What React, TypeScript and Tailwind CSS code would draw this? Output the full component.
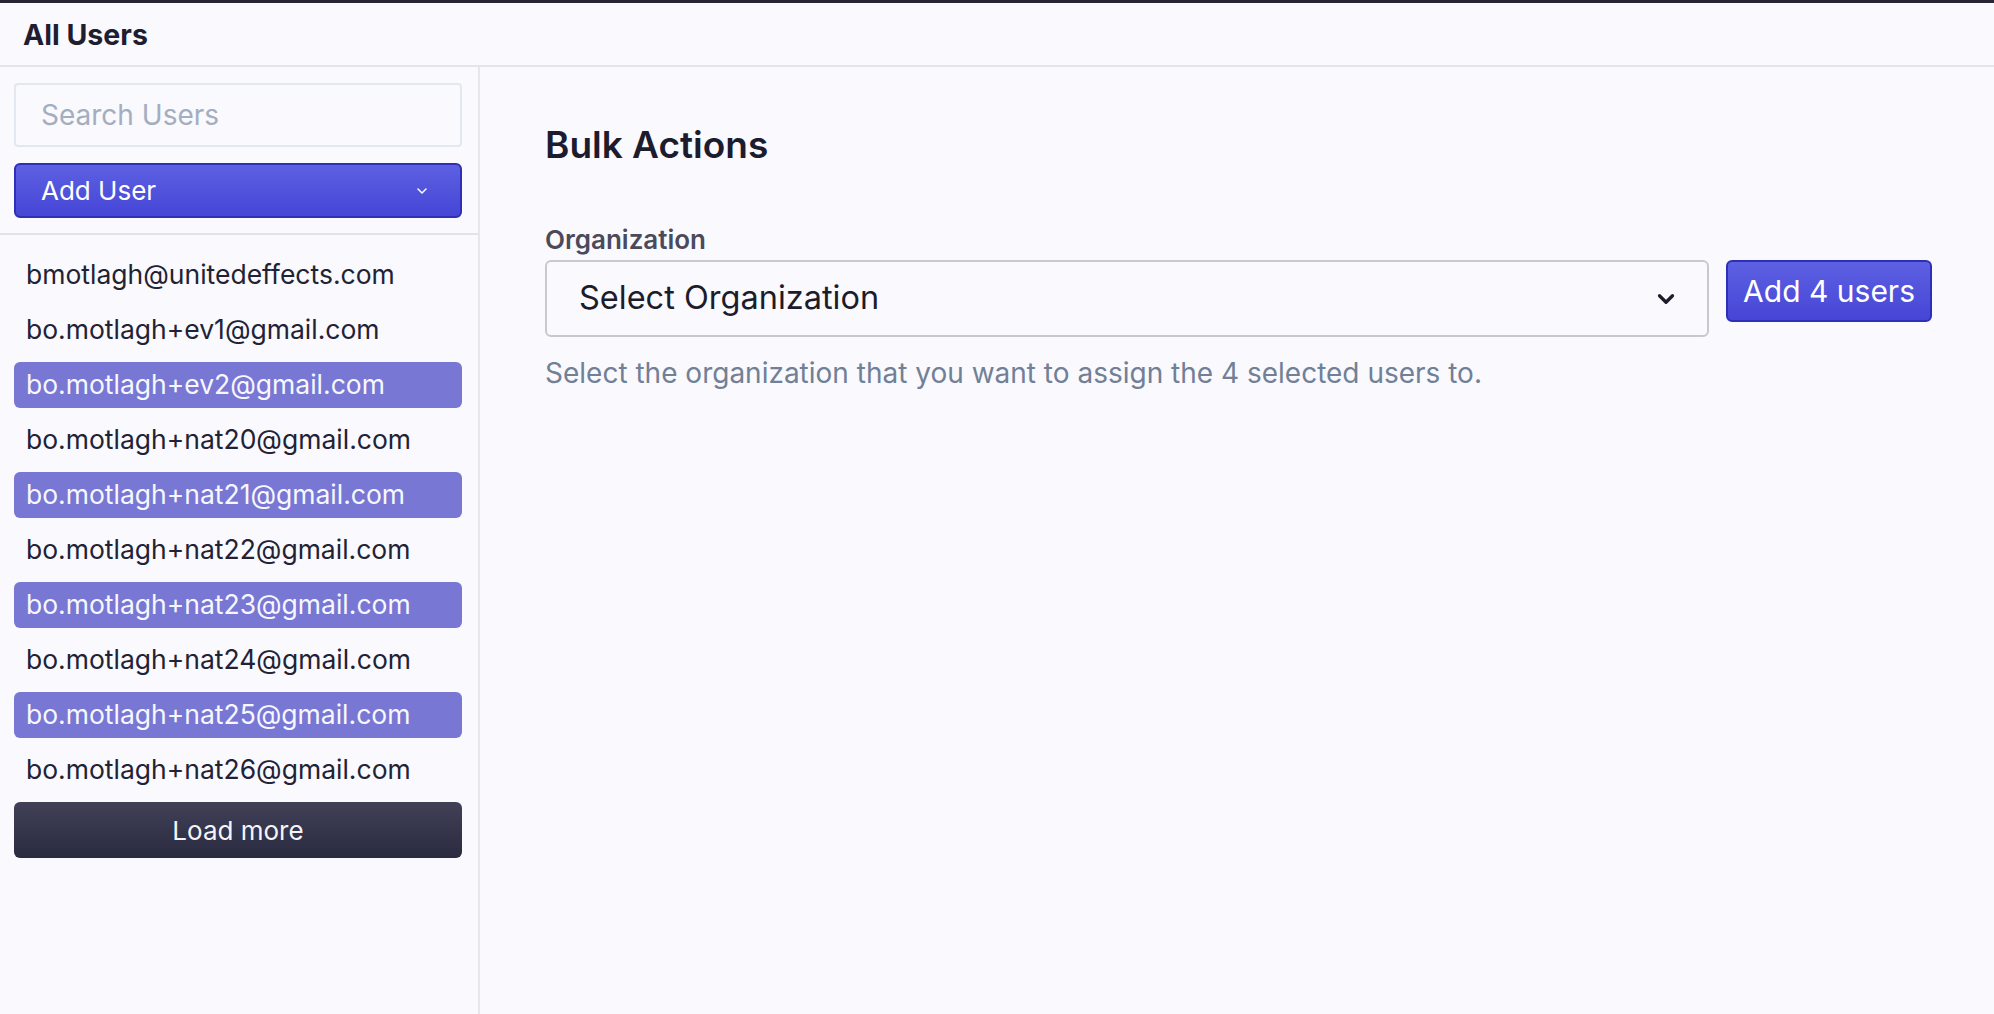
import { ChevronDown } from 'lucide-react'

const users = [
  { email: 'bmotlagh@unitedeffects.com', selected: false },
  { email: 'bo.motlagh+ev1@gmail.com', selected: false },
  { email: 'bo.motlagh+ev2@gmail.com', selected: true },
  { email: 'bo.motlagh+nat20@gmail.com', selected: false },
  { email: 'bo.motlagh+nat21@gmail.com', selected: true },
  { email: 'bo.motlagh+nat22@gmail.com', selected: false },
  { email: 'bo.motlagh+nat23@gmail.com', selected: true },
  { email: 'bo.motlagh+nat24@gmail.com', selected: false },
  { email: 'bo.motlagh+nat25@gmail.com', selected: true },
  { email: 'bo.motlagh+nat26@gmail.com', selected: false },
]

export default function App() {
  return (
    <div className="h-screen flex flex-col bg-[#f9f9fe] text-[#1e1e30] overflow-hidden" style={{ fontFamily: 'Inter, "Noto Sans", sans-serif' }}>
      <div className="h-[3px] bg-[#262637] shrink-0" />
      <header className="h-[64px] shrink-0 flex items-center px-[23px] pt-[3px] border-b-2 border-[#e4e4ec]">
        <h1 className="text-[28.5px] font-bold leading-none text-[#1e1e30]">All Users</h1>
      </header>

      <div className="flex-1 flex min-h-0">
        {/* sidebar */}
        <aside className="w-[480px] shrink-0 border-r-2 border-[#e6e6ee] flex flex-col">
          <div className="pl-[14px] pr-[16px] pt-[16px] pb-[15px] border-b-2 border-[#e2e2ea] flex flex-col gap-[16px]">
            <input
              placeholder="Search Users"
              className="h-[64px] w-full rounded-[4px] border-2 border-[#e3e8f0] bg-[#f9f9fe] px-[25px] text-[28px] outline-none placeholder:text-[#a3aec0]"
            />
            <button className="h-[55px] w-full rounded-[6px] border-2 border-[#2f2fb5] bg-gradient-to-b from-[#5d60e2] to-[#4645d6] flex items-center justify-between pl-[25px] pr-[30px] text-white text-[26px]">
              <span>Add User</span>
              <ChevronDown size={16} strokeWidth={2.25} />
            </button>
          </div>

          <div className="pl-[14px] pr-[16px] pt-[17px] flex flex-col gap-[9px]">
            {users.map((u) => (
              <div
                key={u.email}
                className={`h-[46px] rounded-[6px] flex items-center px-[12px] text-[26.5px] ${
                  u.selected ? 'bg-[#7877d3] text-[#f7f7ff]' : 'text-[#222235]'
                }`}>
                {u.email}
              </div>
            ))}
            <button className="h-[56px] rounded-[6px] bg-gradient-to-b from-[#404057] to-[#2a2a40] text-[#f4f4fa] text-[26px]">
              Load more
            </button>
          </div>
        </aside>

        {/* main */}
        <main className="flex-1 pl-[65px] pr-[62px] pt-[56px]">
          <h2 className="text-[37px] leading-[44px] font-semibold text-[#1c1c2e]">Bulk Actions</h2>

          <label className="block mt-[58px] text-[26px] leading-[30px] font-semibold text-[#4a4a5c]">Organization</label>
          <div className="mt-[5px] flex items-start gap-[17px]">
            <div className="flex-1 h-[77px] rounded-[6px] border-2 border-[#c8c8d0] flex items-center justify-between pl-[32px] pr-[28px]">
              <span className="text-[32.5px] text-[#1c1c2a]">Select Organization</span>
              <ChevronDown size={26} strokeWidth={3} className="text-[#1c1c2a]" />
            </div>
            <button className="h-[62px] rounded-[6px] border-2 border-[#2f2fb5] bg-gradient-to-b from-[#5d60e2] to-[#4645d6] px-[15px] text-white text-[30px]">
              Add 4 users
            </button>
          </div>
          <p className="mt-[19px] text-[28px] leading-[34px] text-[#718096]">
            Select the organization that you want to assign the 4 selected users to.
          </p>
        </main>
      </div>
    </div>
  )
}
